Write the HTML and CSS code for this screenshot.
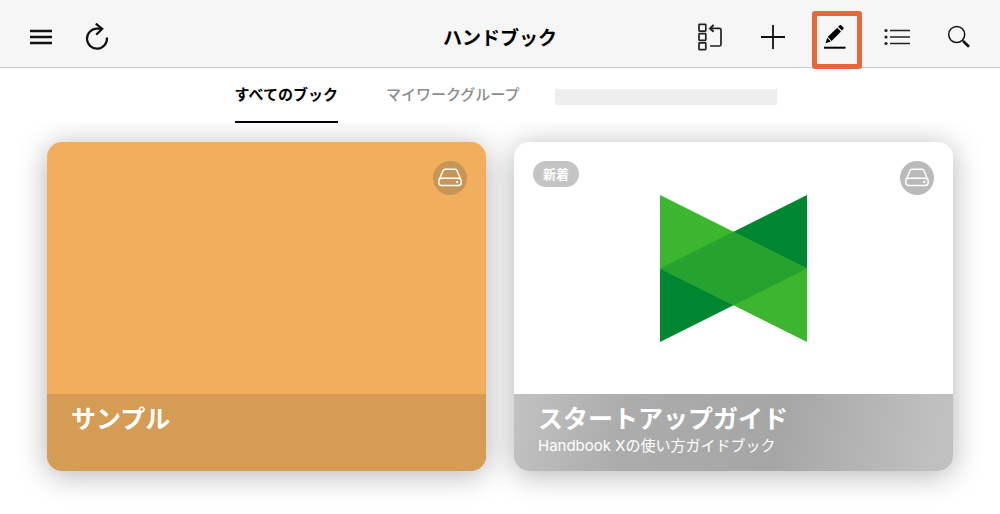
FILE: index.html
```html
<!DOCTYPE html>
<html lang="ja">
<head>
    <meta charset="UTF-8">
    <meta name="viewport" content="width=device-width, initial-scale=1.0">
    <title>ハンドブック</title>
    <link rel="stylesheet" href="styles.css">
</head>
<body>
    <header class="header">
        <div class="header-left">
            <button type="button" class="icon-btn" aria-label="メニュー">
                <svg width="22" height="16" viewBox="0 0 22 16"><path d="M0 2h22M0 8h22M0 14h22" stroke="#111" stroke-width="2.4"/></svg>
            </button>
            <button type="button" class="icon-btn" aria-label="更新">
                <svg width="24" height="28" viewBox="0 0 24 28" fill="none" stroke="#111" stroke-width="2.2"><path d="M21.9 14.5A10 10 0 1 1 12 5.7H17"/><path d="M10.8 .6l6.4 5.3-6 5.9"/></svg>
            </button>
        </div>
        <h1>ハンドブック</h1>
        <div class="header-right">
            <button type="button" class="icon-btn" aria-label="並べ替え">
                <svg width="26" height="28" viewBox="0 0 26 28" fill="none" stroke="#222" stroke-width="1.7"><rect x="1" y="1.4" width="6.8" height="6.8" rx=".6"/><rect x="1" y="10.6" width="6.8" height="6.8" rx=".6"/><rect x="1" y="19.8" width="6.8" height="6.8" rx=".6"/><path d="M12 23H21.4q1.6 0 1.6-1.6V7q0-1.6-1.6-1.6h-8.5"/><path d="M15.6 2l-3.6 3.4L15.6 8.8" stroke-width="2"/></svg>
            </button>
            <button type="button" class="icon-btn" aria-label="追加">
                <svg width="24" height="24" viewBox="0 0 24 24"><path d="M0 12h24M12 0v24" stroke="#111" stroke-width="1.8"/></svg>
            </button>
            <button type="button" class="icon-btn highlight" aria-label="編集">
                <svg width="24" height="26" viewBox="0 0 24 26" fill="#000"><path d="M2.6 19.2L4.2 13.8L7.9 17.6z"/><path d="M4.8 12.8L14.2 3.7L18 7.5L8.6 16.9z"/><path d="M15.1 2.8L16.7 1.3Q17.6 .6 18.5 1.4L20.4 3.4Q21.2 4.3 20.4 5.1L18.9 6.6z"/><path d="M1 22.7h21.5v2H1z"/></svg>
            </button>
            <button type="button" class="icon-btn" aria-label="リスト">
                <svg width="26" height="18" viewBox="0 0 26 18"><path d="M6 2.5h20M6 9h20M6 15.5h20" stroke="#222" stroke-width="1.6"/><g fill="#222"><circle cx="2" cy="2.5" r="1.6"/><circle cx="2" cy="9" r="1.6"/><circle cx="2" cy="15.5" r="1.6"/></g></svg>
            </button>
            <button type="button" class="icon-btn" aria-label="検索">
                <svg width="24" height="24" viewBox="0 0 24 24" fill="none" stroke="#111"><circle cx="9.7" cy="9.5" r="8" stroke-width="1.5"/><path d="M15.2 15.2l1.5 1.5" stroke-width="1.5"/><path d="M16.3 16.3l5.7 5.5" stroke-width="2.6"/></svg>
            </button>
        </div>
    </header>

    <div class="tabs">
        <nav class="tab-list">
            <a href="#all" class="tab active">すべてのブック</a>
            <a href="#group" class="tab">マイワークグループ</a>
        </nav>
        <div class="tab-blank"></div>
    </div>

    <main class="books">
        <article class="book orange">
            <div class="cover">
                <span class="drive">
                    <svg width="34" height="34" viewBox="0 0 34 34" fill="none" stroke="#fff" stroke-width="1.5"><path d="M6.3 18.3L10 9.7Q10.6 8.3 12 8.3h10q1.4 0 2 1.4l3.7 8.6"/><rect x="5.8" y="17.3" width="22.4" height="7.2" rx="3"/><circle cx="24.2" cy="20.9" r="1.2" fill="#fff" stroke="none"/></svg>
                </span>
            </div>
            <div class="caption">
                <h2>サンプル</h2>
            </div>
        </article>
        <article class="book">
            <div class="cover">
                <svg class="logo" width="147" height="147" viewBox="0 0 147 147"><path fill="#008530" d="M147 0v73.5L0 147V73.5z"/><path fill="#3cb62e" d="M0 0v73.5L147 147V73.5z"/><path fill="#26a32e" d="M73.5 36.75L147 73.5L73.5 110.25L0 73.5z"/></svg>
                <span class="badge">新着</span>
                <span class="drive">
                    <svg width="34" height="34" viewBox="0 0 34 34" fill="none" stroke="#fff" stroke-width="1.5"><path d="M6.3 18.3L10 9.7Q10.6 8.3 12 8.3h10q1.4 0 2 1.4l3.7 8.6"/><rect x="5.8" y="17.3" width="22.4" height="7.2" rx="3"/><circle cx="24.2" cy="20.9" r="1.2" fill="#fff" stroke="none"/></svg>
                </span>
            </div>
            <div class="caption gray">
                <h2>スタートアップガイド</h2>
                <p>Handbook Xの使い方ガイドブック</p>
            </div>
        </article>
    </main>
</body>
</html>
```
FILE: styles.css
```css
*,
*::after {
    box-sizing: border-box;
}

body {
    margin: 0;
    background: #fff;
    color: #000;
    font-family: "Noto Sans CJK JP", sans-serif;
}

.header {
    display: grid;
    grid-template-columns: 1fr auto 1fr;
    align-items: center;
    height: 68px;
    padding: 6px 21px 0;
    background: #f6f6f6;
    border-bottom: 1px solid #c8c8c8;
}

.header h1 {
    margin: 0;
    font-size: 19px;
    line-height: 28px;
    font-weight: bold;
}

.header-left,
.header-right {
    display: flex;
    align-items: center;
}

.header-left {
    gap: 16px;
}

.header-right {
    justify-content: flex-end;
    gap: 22px;
}

.icon-btn {
    display: flex;
    align-items: center;
    justify-content: center;
    width: 40px;
    height: 40px;
    padding: 0;
    background: none;
    border: none;
    cursor: pointer;
}

.highlight {
    position: relative;
}

.highlight::after {
    content: "";
    position: absolute;
    z-index: 2;
    top: -6px;
    left: -3px;
    width: 50px;
    height: 58px;
    border: 5px solid #e8683c;
    border-radius: 3px;
}

.tabs {
    position: relative;
    z-index: 1;
    display: flex;
    justify-content: center;
    gap: 36px;
    padding-left: 12px;
    background: #fff;
}

.tab-list {
    display: flex;
    gap: 48px;
}

.tab {
    height: 55px;
    padding-top: 14px;
    font-size: 15px;
    line-height: 24px;
    font-weight: 500;
    color: #8c8c8c;
    text-decoration: none;
}

.tab.active {
    font-weight: bold;
    color: #000;
    border-bottom: 2px solid #000;
}

.tab-blank {
    width: 222px;
    height: 16px;
    margin-top: 21px;
    background: #eee;
}

.books {
    display: grid;
    grid-template-columns: 1fr 1fr;
    gap: 28px;
    padding: 19px 47px 40px;
}

.book {
    display: flex;
    flex-direction: column;
    aspect-ratio: 4 / 3;
    overflow: hidden;
    background: #fff;
    border-radius: 15px;
    box-shadow: 0 4px 30px rgba(0, 0, 0, 0.3);
}

.book.orange {
    background: #f1ae5d;
}

.cover {
    position: relative;
    display: flex;
    flex: 1;
    align-items: center;
    justify-content: center;
}

.drive {
    position: absolute;
    top: 19px;
    right: 19px;
    width: 34px;
    height: 34px;
    background: #bababa;
    border-radius: 50%;
}

.orange .drive {
    background: #c79554;
}

.badge {
    position: absolute;
    top: 19px;
    left: 19px;
    padding: 0 10px;
    background: #c4c4c4;
    border-radius: 13px;
    color: #fff;
    font-size: 13px;
    line-height: 26px;
    font-weight: bold;
}

.caption {
    height: 77px;
    padding: 6px 24px;
    background: #d49c55;
    color: #fff;
}

.caption.gray {
    background: linear-gradient(100deg, #c2c2c2 0%, #acacac 25%, #a6a6a6 60%, #c0c0c0 95%);
}

.caption h2 {
    margin: 0;
    font-size: 25px;
    line-height: 35px;
    font-weight: bold;
}

.caption p {
    margin: 0;
    font-family: Inter, "Noto Sans CJK JP", sans-serif;
    font-size: 15px;
    line-height: 22px;
    font-weight: 400;
}
```
